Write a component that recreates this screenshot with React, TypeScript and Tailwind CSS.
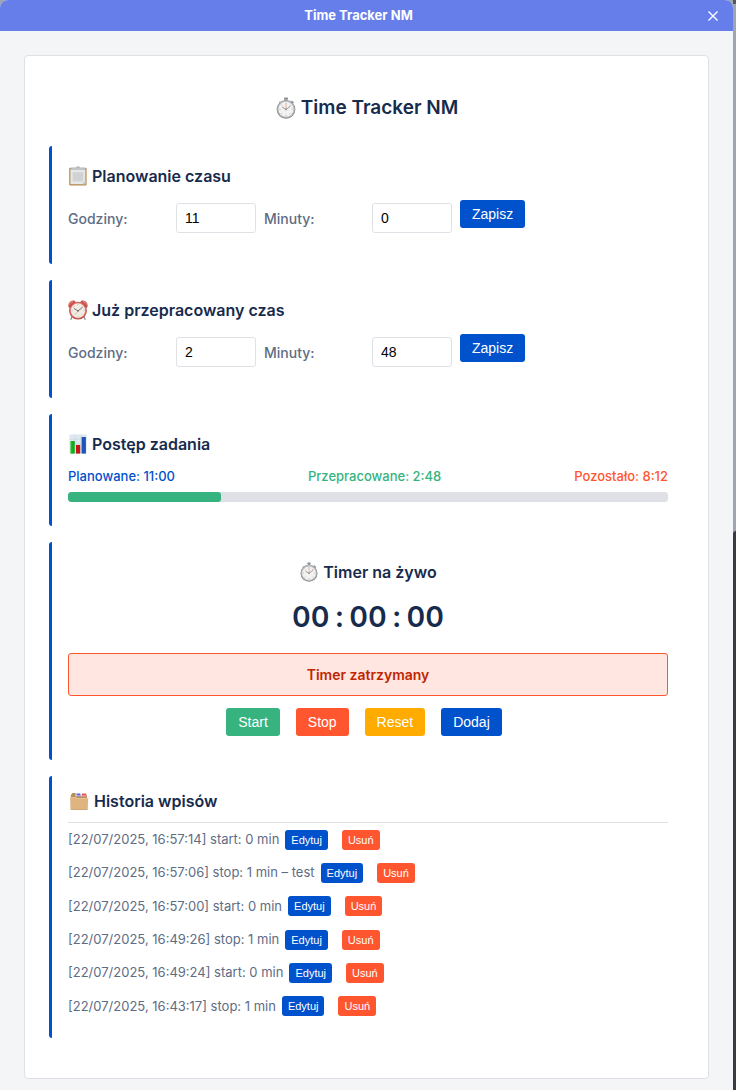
import type { ReactNode } from "react";

function StopwatchIcon({ className }: { className: string }) {
  return (
    <svg viewBox="0 0 20 20" className={className} aria-hidden="true">
      <rect x="8.2" y="0.4" width="3.6" height="2.2" rx="0.8" fill="#8b9095" />
      <rect x="9.1" y="2" width="1.8" height="2" fill="#9a9ea3" />
      <path d="M15.3 3.2l1.9 1.7-1.1 1.3-1.9-1.7z" fill="#8b9095" />
      <path d="M4.4 3.9l1 .9-.9 1-1-.9z" fill="#a9adb1" />
      <circle cx="10" cy="11.2" r="8.5" fill="#85898e" />
      <circle cx="10" cy="11" r="7.9" fill="#b9bdc1" />
      <circle cx="10" cy="11.2" r="6.8" fill="#f3f2f0" />
      <g stroke="#a0a2a5" strokeWidth="0.6">
        <path d="M10 5v1.2M10 16.2v1.2M3.8 11.2H5M15 11.2h1.2M5.7 6.9l.8.8M14.3 6.9l-.8.8M5.7 15.5l.8-.8M14.3 15.5l-.8-.8" />
      </g>
      <path d="M10 11.3V5.9" stroke="#e4a88f" strokeWidth="0.8" />
      <path d="M6.4 9l3.5 2.4 4.3-3.2" fill="none" stroke="#8b8d90" strokeWidth="0.8" />
      <circle cx="10" cy="11.3" r="0.8" fill="#8b8d90" />
    </svg>
  );
}

function ClipboardIcon() {
  return (
    <svg viewBox="0 0 20 20" className="h-5 w-5" aria-hidden="true">
      <rect x="1.2" y="1.8" width="17.4" height="17.6" rx="1.2" fill="#b48a51" />
      <rect x="2.4" y="3" width="15" height="15.2" fill="#e6e7e7" />
      <path d="M4.6 6h10.8v9.6H4.600z" fill="#d5d6d7" />
      <path d="M5 8h10M5 10h10M5 12h10M5 14h8" stroke="#c9cacc" strokeWidth="0.6" />
      <path d="M14 18.2l3.400-3.200v3.200z" fill="#c9c6c1" />
      <path d="M2.800 4V2.700c0-.5.4-.9.9-.9h4.200C8.200.8 8.900.3 10 .3s1.800.5 2.100 1.500h4.200c.5 0 .9.4.9.9V4z" fill="#b4bbbe" />
      <path d="M3.600 3h12.800" stroke="#d5dadd" strokeWidth="0.7" />
    </svg>
  );
}

function AlarmIcon() {
  return (
    <svg viewBox="0 0 20 20" className="h-5 w-5" aria-hidden="true">
      <path d="M4.200 16.600L2.900 19.300M15.800 16.600l1.300 2.700" stroke="#83807f" strokeWidth="1.200" strokeLinecap="round" />
      <path d="M.5 7C-.2 3 2.300.2 6.300.5L8 2.200 1.800 8z" fill="#cf524e" />
      <path d="M19.500 7C20.200 3 17.700.2 13.700.5L12 2.200 18.200 8z" fill="#cf524e" />
      <path d="M1.600 4.500c.5-1.600 1.600-2.600 3.300-2.700M18.400 4.500c-.5-1.600-1.600-2.600-3.300-2.700" stroke="#eba29e" strokeWidth="0.900" fill="none" />
      <circle cx="10" cy="10.600" r="8.900" fill="#b94643" />
      <circle cx="10" cy="10.400" r="8.400" fill="#d76a64" />
      <circle cx="10" cy="10.600" r="7.300" fill="#f1ece3" />
      <g stroke="#a09c96" strokeWidth="0.600">
        <path d="M10 4.200v1M10 16v1M3.600 10.600h1M15.400 10.600h1M5.500 6.100l.7.700M14.500 6.100l-.7.700M5.500 15.100l.7-.7M14.500 15.100l-.7-.7" />
      </g>
      <path d="M5.800 8.300L10 10.900l4.600-3.600" fill="none" stroke="#6d6966" strokeWidth="0.900" />
      <path d="M10 10.900l-2.700 3.800" stroke="#d9988b" strokeWidth="0.500" />
      <circle cx="10" cy="10.900" r="0.800" fill="#6d6966" />
    </svg>
  );
}

function ChartIcon() {
  return (
    <svg viewBox="0 0 20 20" className="h-5 w-5" aria-hidden="true">
      <rect x="1.500" y="0.400" width="17.200" height="19.200" fill="#dfe8f0" />
      <path d="M1.500 5.200h17.200M1.500 10h17.200M1.500 14.800h17.200M7.200.4v19.200M12.900.4v19.200" stroke="#c4d2de" strokeWidth="0.500" />
      <rect x="2.600" y="7" width="4.200" height="12.600" fill="#14ad1f" />
      <rect x="8" y="11" width="4.200" height="8.600" fill="#c5151c" />
      <rect x="13.600" y="3" width="4.300" height="16.600" fill="#1c57b8" />
      <path d="M3 7v12.600" stroke="#3fd048" strokeWidth="0.600" />
    </svg>
  );
}

function FoldersIcon() {
  return (
    <svg viewBox="0 0 20 20" className="h-5 w-[22px]" aria-hidden="true">
      <path d="M1.800 18V4.200L3.300 2h4.200L9 4h9v14z" fill="#b98f5c" />
      <path d="M6.500 2.200h5.200l.5 3H6.500z" fill="#e9e4f4" />
      <path d="M7.700 2.600h3.600v1.500H7.700z" fill="#5361d8" />
      <path d="M12.300 2.400h5.200v3h-5.200z" fill="#f3dede" />
      <path d="M13 2.600h4.200v1.500H13z" fill="#e05252" />
      <path d="M7.800 4.900h4" stroke="#6d72d8" strokeWidth="0.800" />
      <path d="M12.800 4.900h5.200" stroke="#dd5b5b" strokeWidth="0.800" />
      <path d="M1.200 6h5.900l1 .9h11.100l-.5 11.600H1.700z" fill="#dfb47f" />
      <path d="M1.300 6.500h5.600l1 .9h11.200" fill="none" stroke="#efcb9d" strokeWidth="0.600" />
      <path d="M1.700 18.500h17" stroke="#bd935d" strokeWidth="0.700" />
    </svg>
  );
}

function Section({ children, className = "pb-4" }: { children: ReactNode; className?: string }) {
  return (
    <section className={`rounded-[3px] border-l-[3px] border-[#0052cc] px-4 pt-4 ${className}`}>
      {children}
    </section>
  );
}

function Heading({ icon, children, className = "" }: { icon: ReactNode; children: ReactNode; className?: string }) {
  return (
    <h2 className={`flex items-center gap-1 text-base leading-7 font-semibold ${className}`}>
      {icon}
      {children}
    </h2>
  );
}

const button = "rounded-[3px] px-3 font-['Liberation_Sans',sans-serif] text-sm leading-7 font-medium text-white";

function TimeForm({ id, hours, minutes }: { id: string; hours: number; minutes: number }) {
  const input =
    "h-[30px] w-20 rounded-[3px] border border-[#dfe1e6] bg-white px-2 font-['Liberation_Sans',sans-serif] text-sm text-black";
  const label = "w-[100px] pt-px text-sm font-medium text-[#5e6c84]";
  return (
    <form className="mt-2.5 flex items-start gap-2 pb-[15px]" onSubmit={(e) => e.preventDefault()}>
      <div className="flex items-center gap-2 pt-[3px]">
        <label className={label} htmlFor={`${id}-hours`}>Godziny:</label>
        <input className={input} id={`${id}-hours`} inputMode="numeric" defaultValue={hours} />
        <label className={label} htmlFor={`${id}-minutes`}>Minuty:</label>
        <input className={input} id={`${id}-minutes`} inputMode="numeric" defaultValue={minutes} />
      </div>
      <button className={`${button} bg-[#0052cc]`}>Zapisz</button>
    </form>
  );
}

const entries = [
  "[22/07/2025, 16:57:14] start: 0 min",
  "[22/07/2025, 16:57:06] stop: 1 min – test",
  "[22/07/2025, 16:57:00] start: 0 min",
  "[22/07/2025, 16:49:26] stop: 1 min",
  "[22/07/2025, 16:49:24] start: 0 min",
  "[22/07/2025, 16:43:17] stop: 1 min",
];

export default function App() {
  const planned = 11 * 60;
  const worked = 2 * 60 + 48;
  const small = "rounded-[3px] px-1.5 font-['Liberation_Sans',sans-serif] text-[11px] leading-5 font-medium text-white";

  return (
    <div className="flex min-h-screen bg-[#9da5b1] font-[Inter,sans-serif] text-[#172b4d]">
      <div className="flex min-w-0 flex-1 flex-col overflow-hidden rounded-t-lg bg-[#f4f5f7]">
        <header className="flex h-[31px] items-center bg-[#667eea] pr-3.5 pl-2.5 text-white">
          <div className="flex-1 text-center text-[13px] font-bold">Time Tracker NM</div>
          <button aria-label="Zamknij">
            <svg viewBox="0 0 12 12" className="h-3 w-3" aria-hidden="true">
              <path d="M1.500 1.500l9 9M10.500 1.500l-9 9" stroke="currentColor" strokeWidth="1.400" />
            </svg>
          </button>
        </header>
        <main className="mx-6 mt-6 mb-[11px] rounded-[4px] border border-[#dfe1e6] bg-white px-6 pt-6 pb-10">
          <h1 className="flex items-center justify-center gap-1 pt-3 pb-[22px] text-[19px] leading-8 font-semibold">
            <StopwatchIcon className="h-[22px] w-[22px]" />
            Time Tracker NM
          </h1>
          <div className="flex flex-col gap-4">
            <Section>
              <Heading icon={<ClipboardIcon />}>Planowanie czasu</Heading>
              <TimeForm id="planned" hours={11} minutes={0} />
            </Section>
            <Section>
              <Heading icon={<AlarmIcon />}>Już przepracowany czas</Heading>
              <TimeForm id="worked" hours={2} minutes={48} />
            </Section>
            <Section className="pb-6">
              <Heading icon={<ChartIcon />}>Postęp zadania</Heading>
              <div className="mt-2 flex justify-between text-[13px] leading-5 font-medium">
                <span className="text-[#0052cc]">Planowane: 11:00</span>
                <span className="text-[#36b37e]">Przepracowane: 2:48</span>
                <span className="text-[#ff5630]">Pozostało: 8:12</span>
              </div>
              <div className="mt-1.5 h-2.5 overflow-hidden rounded-[3px] bg-[#dfe1e6]">
                <div className="h-full rounded-[3px] bg-[#36b37e]" style={{ width: `${(worked / planned) * 100}%` }} />
              </div>
            </Section>
            <Section className="pb-6">
              <Heading icon={<StopwatchIcon className="h-5 w-5" />} className="justify-center">Timer na żywo</Heading>
              <div className="mt-[13px] flex justify-center gap-1.5 text-[29px] leading-9 font-semibold tabular-nums">
                <span>00</span>
                <span>:</span>
                <span>00</span>
                <span>:</span>
                <span>00</span>
              </div>
              <div className="mt-[18px] rounded-[3px] border border-[#ff5630] bg-[#ffe6e1] py-2.5 text-center text-sm leading-[21px] font-semibold text-[#bf2600]">
                Timer zatrzymany
              </div>
              <div className="mt-3 flex justify-center gap-4 pr-2">
                <button className={`${button} bg-[#36b37e]`}>Start</button>
                <button className={`${button} bg-[#ff5630]`}>Stop</button>
                <button className={`${button} bg-[#ffab00]`}>Reset</button>
                <button className={`${button} bg-[#0052cc]`}>Dodaj</button>
              </div>
            </Section>
            <Section className="pb-[15px]">
              <Heading icon={<FoldersIcon />} className="-mt-[5px] mb-[7px]">Historia wpisów</Heading>
              <ul className="grid min-h-[201px] auto-rows-fr border-t border-[#dfe1e6] text-[13px] text-[#5e6c84]">
                {entries.map((entry) => (
                  <li key={entry} className="flex items-center">
                    <span>{entry}</span>
                    <button className={`${small} ml-1.5 bg-[#0052cc]`}>Edytuj</button>
                    <button className={`${small} ml-3.5 bg-[#ff5630]`}>Usuń</button>
                  </li>
                ))}
              </ul>
            </Section>
          </div>
        </main>
      </div>
      <div className="flex w-[3px] flex-col">
        <div className="h-1 bg-[#55565e]" />
        <div className="h-[527px]" />
        <div className="flex-1 rounded-tl-[3px] bg-[#3d3a43]" />
      </div>
    </div>
  );
}
